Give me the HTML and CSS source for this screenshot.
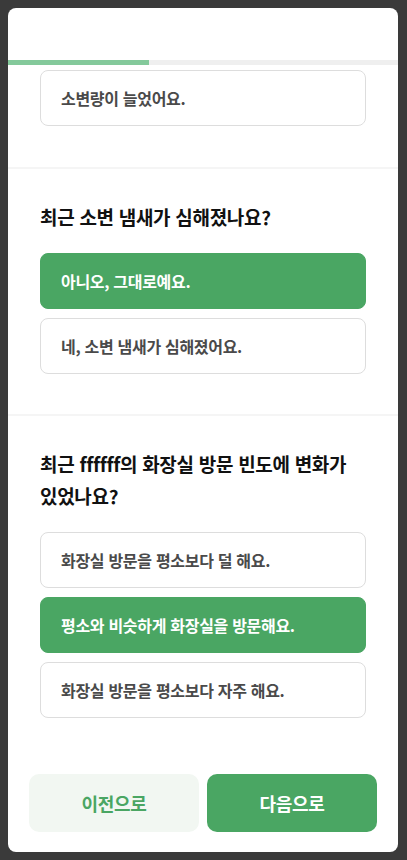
FILE: index.html
```html
<!DOCTYPE html>
<html lang="ko">
<head>
<meta charset="utf-8">
<link rel="stylesheet" href="styles.css">
</head>
<body>
<div class="card">
  <div class="header"></div>
  <div class="progress"><div class="progress-fill" style="width: 36.2%"></div></div>
  <div class="content">
    <section class="section first">
      <div class="options">
        <div class="option">소변량이 늘었어요.</div>
      </div>
    </section>
    <section class="section">
      <h2 class="question">최근 소변 냄새가 심해졌나요?</h2>
      <div class="options">
        <div class="option selected">아니오, 그대로예요.</div>
        <div class="option">네, 소변 냄새가 심해졌어요.</div>
      </div>
    </section>
    <section class="section">
      <h2 class="question">최근 ffffff의 화장실 방문 빈도에 변화가 있었나요?</h2>
      <div class="options">
        <div class="option">화장실 방문을 평소보다 덜 해요.</div>
        <div class="option selected">평소와 비슷하게 화장실을 방문해요.</div>
        <div class="option">화장실 방문을 평소보다 자주 해요.</div>
      </div>
    </section>
  </div>
  <div class="footer">
    <button class="btn btn-prev">이전으로</button>
    <button class="btn btn-next">다음으로</button>
  </div>
</div>
</body>
</html>
```

FILE: styles.css
```css
* { box-sizing: border-box; }
html, body { margin: 0; padding: 0; }
body {
  background: #3a3a3a;
  padding: 8px 9px 8px 8px;
  font-family: "Noto Sans CJK KR", "Noto Sans", sans-serif;
  height: 860px;
}
.card {
  background: #fff;
  border-radius: 8px;
  overflow: hidden;
  height: 844px;
  display: flex;
  flex-direction: column;
}
.header { height: 52px; flex: none; }
.progress {
  height: 5px;
  background: #efefef;
  flex: none;
}
.progress-fill {
  height: 100%;
  background: #84c99b;
}
.content { flex: 1; }
.section {
  padding: 32px 32px 40px;
  border-top: 2px solid #f5f5f5;
}
.section.first {
  padding-top: 5px;
  padding-bottom: 41px;
  border-top: none;
}
.question {
  margin: 0 0 20px;
  font-size: 19px;
  line-height: 32px;
  font-weight: 700;
  color: #111;
  letter-spacing: -0.3px;
  word-break: keep-all;
}
.options {
  display: flex;
  flex-direction: column;
  gap: 9px;
}
.option {
  height: 56px;
  border: 1px solid #dddddd;
  border-radius: 8px;
  padding: 0 20px;
  display: flex;
  align-items: center;
  font-size: 16px;
  font-weight: 700;
  color: #4a4a4a;
  letter-spacing: -0.3px;
}
.option.selected {
  background: #4aa663;
  border-color: #4aa663;
  color: #fff;
}
.footer {
  display: flex;
  gap: 8px;
  padding: 0 21px 20px;
  flex: none;
}
.btn {
  flex: 1;
  height: 58px;
  border: none;
  border-radius: 10px;
  font-family: inherit;
  font-size: 18px;
  font-weight: 700;
  letter-spacing: -0.3px;
  cursor: pointer;
}
.btn-prev {
  background: #f2f7f2;
  color: #4aa663;
}
.btn-next {
  background: #4aa663;
  color: #fff;
}
```
